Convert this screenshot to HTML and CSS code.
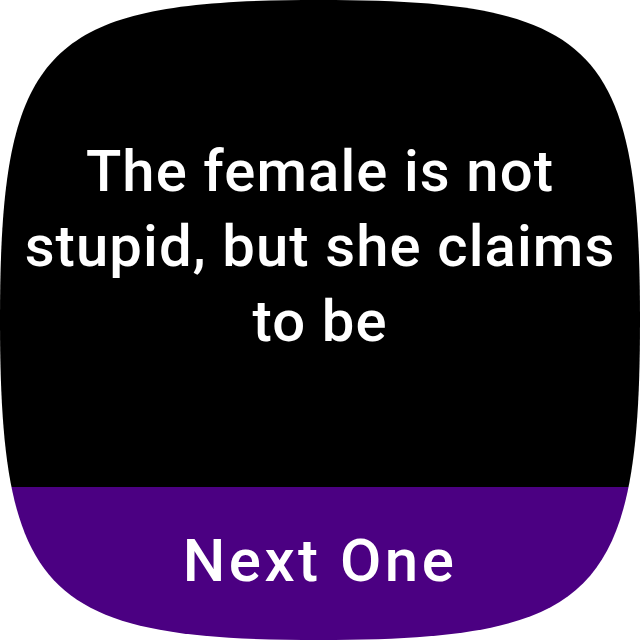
FILE: index.html
```html
<!DOCTYPE html>
<html>
<head>
<meta charset="utf-8">
<link rel="stylesheet" href="styles.css">
</head>
<body>
<div class="screen">
  <div class="message">
    <p class="quote">The female is not stupid, but she claims to be</p>
  </div>
  <div class="action">
    <span class="action-label">Next One</span>
  </div>
</div>
</body>
</html>
```

FILE: styles.css
```css
html, body {
  margin: 0;
  padding: 0;
  background: #ffffff;
}
.screen {
  width: 640px;
  height: 640px;
  display: flex;
  flex-direction: column;
  clip-path: path("M 320 0 C 595.2 0, 640 44.8, 640 320 C 640 595.2, 595.2 640, 320 640 C 44.8 640, 0 595.2, 0 320 C 0 44.8, 44.8 0, 320 0 Z");
  font-family: Roboto, "Noto Sans", sans-serif;
  color: #ffffff;
}
.message {
  height: 487px;
  box-sizing: border-box;
  background: #000000;
  padding: 134px 6px 0;
}
.quote {
  margin: 0;
  text-align: center;
  font-size: 58px;
  line-height: 75px;
  font-weight: 500;
  letter-spacing: 1.1px;
}
.action {
  flex: 1;
  background: #4b0082;
  display: flex;
  justify-content: center;
  padding-top: 36px;
  box-sizing: border-box;
}
.action-label {
  font-size: 60px;
  line-height: 75px;
  font-weight: 500;
  letter-spacing: 3.5px;
}
```
